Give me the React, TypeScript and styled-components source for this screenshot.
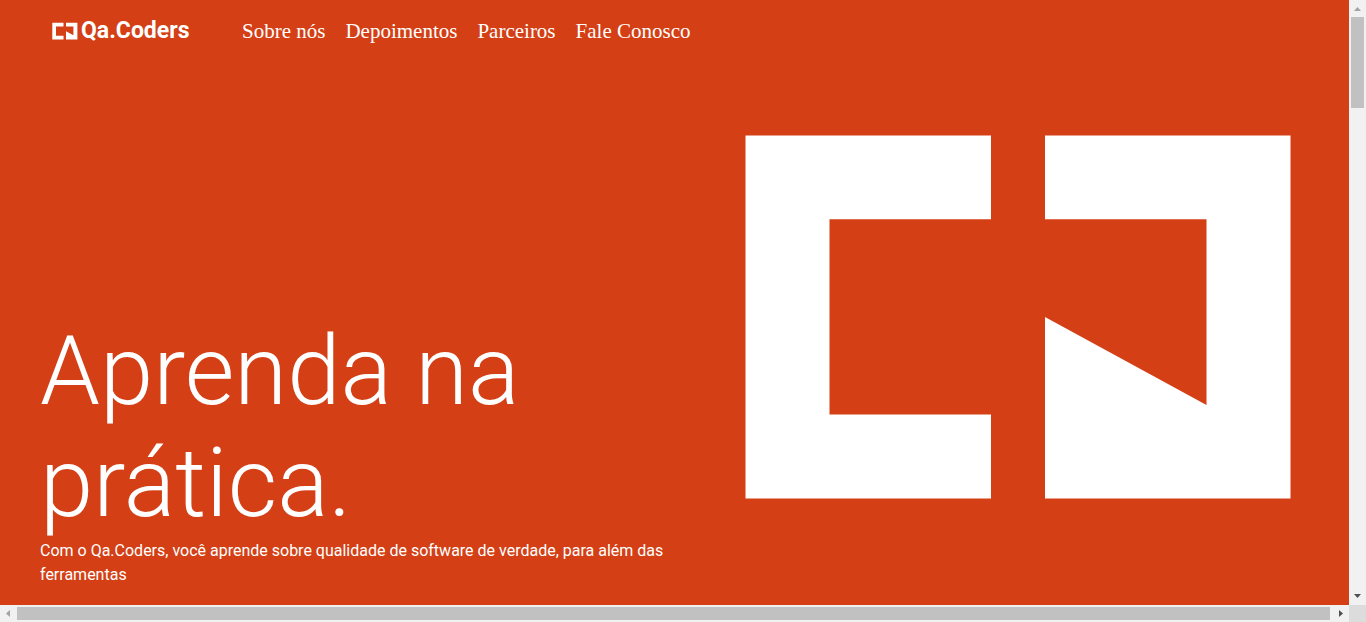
import React from "react";
import styled, { createGlobalStyle } from "styled-components";

const GlobalStyle = createGlobalStyle`
  *, *::before, *::after { box-sizing: border-box; }
  body { margin: 0; background: #d43f15; }
`;

const Frame = styled.div`
  display: grid;
  grid-template-columns: minmax(0, 1fr) 17px;
  grid-template-rows: minmax(0, 1fr) 17px;
  height: 100vh;
  background: #dcdcdc;
`;

const Page = styled.div`
  display: flex;
  flex-direction: column;
  overflow: hidden;
  background: #d43f15;
  color: #fff;
`;

const Header = styled.header`
  display: flex;
  align-items: center;
  gap: 54px;
  height: 62px;
  padding-left: 52px;
  flex-shrink: 0;
`;

const Brand = styled.a`
  display: flex;
  align-items: center;
  gap: 3px;
  width: 136px;
  color: #fff;
  text-decoration: none;
  font: 700 23px/24px Roboto, sans-serif;
`;

const BrandMark = styled.svg`
  width: 26px;
  height: 18px;
  flex-shrink: 0;
`;

const Nav = styled.nav`
  display: flex;
  gap: 20px;
`;

const NavLink = styled.a`
  color: #fff;
  text-decoration: none;
  white-space: nowrap;
  font: 21px/24px "Liberation Serif", serif;
`;

const Hero = styled.main`
  display: grid;
  grid-template-columns: minmax(0, 1fr) 546px;
  column-gap: 60px;
  align-items: start;
  padding: 0 58px 0 40px;
`;

const Intro = styled.section`
  padding-top: 253px;
`;

const Title = styled.h1`
  margin: 0;
  max-width: 520px;
  font: 300 96px/112px Roboto, sans-serif;
`;

const Lead = styled.p`
  margin: 0;
  font: 16px/24px Roboto, sans-serif;
`;

const HeroMark = styled.svg`
  display: block;
  width: 100%;
  margin-top: 73px;
`;

const ScrollBar = styled.div<{ $vertical?: boolean }>`
  display: flex;
  flex-direction: ${(p) => (p.$vertical ? "column" : "row")};
  padding: ${(p) => (p.$vertical ? "0 2px" : "2px 0")};
  background: #f1f1f1;
`;

const ScrollArrow = styled.svg`
  display: block;
  flex: 0 0 17px;
  align-self: center;
  width: 17px;
  height: 17px;
`;

const Track = styled.div<{ $vertical?: boolean }>`
  display: flex;
  flex: 1;
  flex-direction: ${(p) => (p.$vertical ? "column" : "row")};
  padding-right: ${(p) => (p.$vertical ? "0" : "2px")};
`;

const Thumb = styled.div<{ $share: string }>`
  flex: 0 0 ${(p) => p.$share};
  background: #c1c1c1;
`;

const links = ["Sobre nós", "Depoimentos", "Parceiros", "Fale Conosco"];

export default function App() {
  return (
    <>
      <GlobalStyle />
      <Frame>
        <Page>
          <Header>
            <Brand href="#inicio">
              <BrandMark viewBox="0 0 26 18" aria-hidden="true">
                <g fill="#fff">
                  <path d="M.3 .8H11.500V4.500H4V13.800H11.500V17.500H.3Z" />
                  <path d="M14 .8H25.400V17.500H14V9.200L21.400 13.200V4.500H14Z" />
                </g>
              </BrandMark>
              Qa.Coders
            </Brand>
            <Nav>
              {links.map((label) => (
                <NavLink key={label} href="#">
                  {label}
                </NavLink>
              ))}
            </Nav>
          </Header>
          <Hero id="inicio">
            <Intro>
              <Title>Aprenda na prática.</Title>
              <Lead>
                Com o Qa.Coders, você aprende sobre qualidade de software de verdade, para além das
                ferramentas
              </Lead>
            </Intro>
            <HeroMark viewBox="0 0 546 364" aria-hidden="true">
              <g fill="#fff">
                <path d="M.5.5H246V84.300H84.500V279.500H246V363.500H.5Z" />
                <path d="M300 .5H545.500V363.500H300V182L461.500 270V84.300H300Z" />
              </g>
            </HeroMark>
          </Hero>
        </Page>
        <ScrollBar $vertical aria-hidden="true">
          <ScrollArrow viewBox="0 0 17 17">
            <path d="M5 11L8.500 7L12 11Z" fill="#a3a3a3" />
          </ScrollArrow>
          <Track $vertical>
            <Thumb $share="16%" />
          </Track>
          <ScrollArrow viewBox="0 0 17 17">
            <path d="M5 6L8.500 10L12 6Z" fill="#505050" />
          </ScrollArrow>
        </ScrollBar>
        <ScrollBar aria-hidden="true">
          <ScrollArrow viewBox="0 0 17 17">
            <path d="M10 5L6 8.500L10 12Z" fill="#a3a3a3" />
          </ScrollArrow>
          <Track>
            <Thumb $share="100%" />
          </Track>
          <ScrollArrow viewBox="0 0 17 17">
            <path d="M7 5L11 8.500L7 12Z" fill="#505050" />
          </ScrollArrow>
        </ScrollBar>
      </Frame>
    </>
  );
}
